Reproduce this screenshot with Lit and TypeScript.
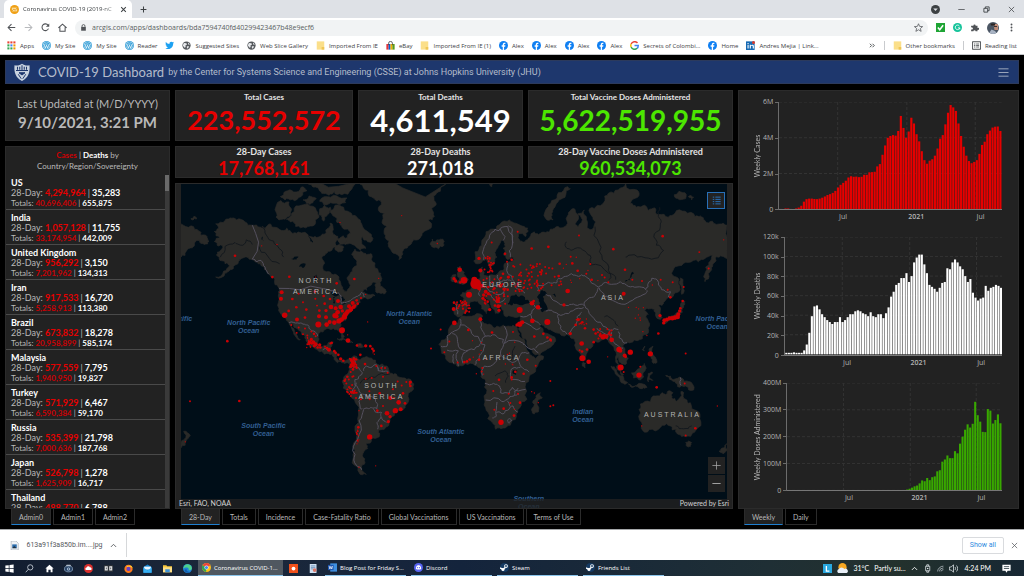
import { LitElement, html, svg, css, nothing } from "lit";
import { customElement, state } from "lit/decorators.js";
import { classMap } from "lit/directives/class-map.js";

type Pt = [number, number];

const pts = (s: string): Pt[] =>
  s.trim().split(/\s+/).map((p) => p.split(",").map(Number) as Pt);

/* Small deterministic generator, so coastlines look the same on every load. */
const noise = (n: number) => {
  const v = Math.sin(n * 127.1 + 11.7) * 43758.5453;
  return v - Math.floor(v) - 0.5;
};

const rough = (list: Pt[], closed: boolean, amp: number): Pt[] => {
  let cur = list;
  for (let level = 0; level < 2; level++) {
    const next: Pt[] = [];
    const last = closed ? cur.length : cur.length - 1;
    for (let i = 0; i < last; i++) {
      const a = cur[i];
      const b = cur[(i + 1) % cur.length];
      const k = noise(a[0] * 3.1 + b[1] * 1.7 + level) * amp;
      next.push(a, [
        (a[0] + b[0]) / 2 - (b[1] - a[1]) * k,
        (a[1] + b[1]) / 2 + (b[0] - a[0]) * k,
      ]);
    }
    if (!closed) next.push(cur[cur.length - 1]);
    cur = next;
  }
  return cur;
};

const line = (s: string, closed = true, amp = 0.55) =>
  "M" +
  rough(pts(s), closed, amp)
    .map((p) => `${p[0].toFixed(1)} ${p[1].toFixed(1)}`)
    .join("L") +
  (closed ? "Z" : "");

const LAND = [
  // North and Central America
  "118,185 135,174 118,155 130,146 122,132 150,122 165,114 185,120 210,126 232,136 255,142 270,146 285,132 296,142 315,150 335,145 345,152 365,160 385,158 400,166 420,170 440,165 452,160 455,148 465,130 475,150 480,165 492,178 505,168 520,175 510,190 490,200 470,212 452,222 443,240 443,262 455,276 475,285 492,292 498,315 504,330 515,336 522,310 519,290 532,275 545,258 543,240 530,225 540,208 558,214 575,225 590,223 600,250 610,275 618,290 620,302 600,308 585,318 575,332 565,328 560,338 575,342 600,348 580,358 568,354 556,358 548,375 532,388 520,402 512,422 496,432 492,446 504,458 508,472 500,474 494,458 484,450 468,450 450,450 438,456 430,468 428,488 438,502 454,500 462,488 474,487 470,500 464,512 478,514 488,522 486,538 496,546 510,545 524,540 520,552 505,550 488,550 478,534 460,522 440,515 420,508 400,495 393,480 380,465 368,448 352,432 348,436 358,452 368,472 376,480 364,474 352,452 342,430 334,420 322,410 312,386 310,350 314,332 300,315 286,290 276,276 264,260 246,247 232,240 215,232 200,236 190,245 180,256 165,270 150,280 122,292 146,274 164,258 150,252 135,242 124,226 136,212 144,202 126,196",
  // Arctic archipelago
  "305,100 318,62 342,66 350,88 330,118 312,120",
  "350,100 372,78 398,72 424,92 432,112 420,134 392,144 362,140 346,126 334,118",
  "432,104 448,76 466,82 458,104 446,124",
  "466,92 480,76 506,82 522,96 546,112 560,132 584,160 592,182 578,186 562,170 560,190 572,206 556,212 538,196 520,192 500,190 516,178 526,160 512,148 500,138 486,128 478,110",
  "316,50 332,34 356,36 378,22 396,32 378,50 352,58 330,60",
  "384,60 402,48 424,56 414,68 394,70",
  "434,64 448,50 486,48 516,54 512,68 474,70 446,74",
  "400,12 520,12 540,12 530,28 500,44 478,34 462,46 440,40 430,24",
  "480,198 492,194 506,204 498,216 484,212",
  "600,318 612,306 616,320 632,330 630,342 614,340 602,336",
  // Greenland and Iceland
  "555,12 580,30 598,56 616,62 610,84 628,100 622,122 636,140 632,168 642,182 640,200 654,220 672,240 682,226 686,208 704,196 716,180 738,170 748,154 770,136 760,120 778,110 770,86 784,72 776,48 796,34 812,12",
  "766,190 772,178 782,186 796,178 808,184 806,198 790,207 774,202",
  // Far eastern Siberia across the date line
  "18,132 48,138 72,154 78,166 96,170 102,184 88,194 74,182 58,192 52,204 34,214 18,232",
  "48,116 60,110 66,116 54,120",
  // Caribbean
  "486,478 502,474 520,482 534,490 518,488 500,482", "544,496 560,494 566,502 550,504",
  // South America
  "520,546 530,534 542,530 546,540 560,536 590,536 606,554 636,560 646,582 664,584 690,596 710,606 714,622 700,642 694,676 684,692 662,698 648,716 642,734 630,748 614,752 614,766 594,776 588,788 574,792 578,808 562,830 570,850 560,866 574,886 552,880 538,858 534,826 544,782 550,730 552,684 530,656 516,636 504,612 510,588 524,570",
  // Africa
  "855,415 880,410 915,403 922,408 918,422 928,432 948,436 956,446 976,444 984,436 1004,440 1024,440 1028,452 1036,474 1050,492 1060,516 1074,532 1080,540 1105,530 1104,540 1088,560 1066,586 1053,610 1056,660 1034,686 1024,712 1006,738 984,746 962,750 952,730 940,700 930,668 936,632 930,612 918,592 916,566 900,558 870,552 850,562 832,550 812,530 798,508 800,482 820,456 832,434",
  "1072,686 1074,664 1084,656 1096,640 1102,656 1090,698 1078,704",
  // Eurasia
  "838,404 838,370 862,370 868,358 856,346 872,340 886,330 896,318 906,300 916,292 914,272 922,262 926,284 944,286 966,284 984,272 988,252 1004,246 1018,240 1010,232 994,236 986,226 984,206 990,190 982,180 972,196 962,214 966,232 958,248 948,260 940,258 934,240 922,244 906,252 896,244 900,216 920,196 930,170 946,148 974,134 1004,120 1022,130 1048,140 1060,154 1052,170 1030,162 1036,184 1050,186 1064,172 1078,156 1090,164 1112,158 1126,148 1150,140 1166,142 1178,130 1180,104 1194,86 1204,100 1200,132 1210,140 1218,112 1208,102 1228,90 1234,110 1236,144 1252,148 1262,126 1250,108 1244,86 1268,76 1290,62 1300,40 1330,30 1352,12 1386,30 1388,52 1366,70 1384,82 1402,78 1420,92 1440,84 1452,104 1480,112 1500,100 1530,94 1560,110 1576,108 1590,122 1612,124 1640,132 1656,136 1656,236 1636,228 1622,232 1616,250 1610,270 1600,298 1590,306 1586,290 1592,262 1606,244 1612,226 1590,236 1570,246 1540,248 1512,258 1494,272 1490,282 1508,294 1514,318 1508,338 1490,354 1466,368 1450,378 1456,392 1462,414 1450,418 1442,402 1438,388 1420,388 1408,392 1420,404 1412,412 1424,432 1420,460 1402,478 1372,488 1356,490 1342,500 1350,520 1360,536 1350,556 1338,550 1330,532 1328,548 1336,570 1346,586 1340,588 1326,570 1322,540 1318,512 1308,494 1300,478 1284,480 1262,486 1252,502 1236,520 1232,542 1224,540 1210,516 1202,490 1188,476 1176,464 1144,460 1120,450 1100,436 1092,428 1096,444 1108,460 1118,462 1142,480 1132,498 1104,516 1080,526 1072,512 1056,484 1040,462 1032,444 1036,424 1034,410 1008,410 986,402 980,386 974,380 966,388 974,398 962,402 952,386 946,370 928,352 922,352 926,366 944,384 938,392 934,402 928,394 920,378 908,364 892,366 880,378 874,394 862,406 850,412",
  // British Isles
  "846,310 854,298 848,290 850,276 846,264 856,260 862,272 868,286 880,298 876,308 858,312", "828,302 832,286 842,284 844,298 836,306",
  // Novaya Zemlya and other northern islands
  "1112,116 1120,80 1130,62 1150,38 1178,20 1186,26 1172,46 1152,60 1138,84 1130,100 1134,120",
  "944,12 952,12 950,20", "1498,44 1512,34 1534,44 1532,56 1508,56", "1540,50 1556,52 1550,60",
  // Japan, Sakhalin
  "1464,424 1480,410 1500,404 1514,394 1518,370 1530,364 1526,378 1522,398 1508,414 1486,422 1470,432",
  "1516,294 1524,300 1528,334 1520,344 1518,318",
  // South-east Asia
  "1308,560 1324,570 1344,590 1358,610 1346,612 1328,590", "1360,614 1384,618 1416,624 1402,628 1374,624",
  "1370,580 1384,574 1400,560 1408,552 1414,566 1404,580 1396,602 1376,596", "1420,582 1432,578 1424,588 1434,604 1424,600 1420,608",
  "1422,512 1434,500 1438,530 1446,548 1436,552 1428,530", "1402,510 1410,500 1408,514",
  "1472,588 1486,590 1496,600 1520,596 1540,606 1556,632 1532,620 1508,622 1500,606 1484,600",
  "1224,546 1232,552 1230,566 1222,560",
  // Oceania
  "1392,690 1396,674 1426,668 1442,650 1462,640 1472,646 1478,636 1494,640 1490,656 1504,666 1512,658 1518,636 1526,640 1532,660 1546,670 1568,696 1574,718 1562,754 1546,772 1530,772 1512,766 1504,750 1492,752 1486,740 1462,738 1432,750 1402,752 1400,730",
  "1532,790 1550,790 1546,802 1536,802", "1632,816 1646,806 1656,794 1656,810 1644,824",
  "18,792 28,780 26,756 46,770 34,784 18,806",
].map((s) => line(s));

const WATER = [
  "998,372 1006,352 1022,344 1032,352 1044,348 1064,366 1048,374 1024,372 1008,378",
  "1086,352 1096,336 1110,334 1114,346 1104,352 1112,372 1116,392 1102,398 1092,384 1094,368",
  "468,340 484,332 496,344 486,350", "474,352 480,352 480,372 474,370", "496,350 510,358 500,366", "500,372 518,366 508,374",
  "348,238 370,230 364,240", "372,262 392,252 386,264", "416,290 424,284 426,304 418,306", "256,180 262,170 266,184",
  "1350,306 1366,290 1372,276 1376,282 1364,302", "1130,344 1140,340 1142,352", "1016,572 1026,572 1024,586 1014,584",
  "400,160 408,176 414,188 406,184", "486,180 494,192 484,196",
].map((s) => line(s));

const BORDERS = [
  "232,136 232,238 246,246 258,242 270,262 282,284", "312,326 440,326 464,330 480,338 498,348 500,372 518,366 532,358 548,350 560,338 568,352",
  "342,430 368,430 384,434 398,436 410,454 428,470", "444,512 452,506 466,512", "926,240 928,200 944,166 960,148 972,152 998,140 1012,196 1006,232",
  "976,148 990,170 984,182", "1000,138 1012,150 1014,190", "998,250 998,280 1012,300 1024,326 1040,330 1050,340",
  "968,286 974,306 998,300 1010,304", "944,288 944,306 952,322 976,320 994,328", "906,312 918,322 910,340 916,350", "932,322 944,336 962,344 986,336 990,352",
  "948,346 960,364 976,368 990,356", "862,372 878,378", "846,372 848,404", "1088,334 1086,318 1120,308 1144,310 1150,296 1172,290 1190,282 1210,290 1230,288 1246,304 1270,322",
  "1270,322 1292,308 1310,314 1336,306 1360,320 1386,322 1412,330 1420,310 1430,296 1446,300 1460,330 1486,336 1480,352",
  "1272,324 1288,350 1312,362 1350,374 1380,356 1412,342 1416,332", "1270,324 1260,348 1238,358 1228,376 1240,392 1262,424 1284,440 1306,452 1330,450",
  "1112,344 1126,348 1150,370 1180,378 1200,376 1228,378", "1112,394 1130,392 1150,404 1150,430 1160,452 1176,464", "1150,404 1180,402 1196,392 1226,384",
  "1180,462 1200,440 1206,412 1220,398", "1036,410 1070,402 1078,386", "1066,404 1080,424 1096,436", "1064,366 1080,382 1100,386",
  "1036,426 1056,432 1080,448 1096,444", "1082,506 1110,488 1130,482", "1266,446 1280,456 1310,462", "1290,468 1298,480", "1310,458 1314,486 1330,500 1344,506", "1330,456 1344,488 1356,490",
  "854,418 856,436 832,458 816,470 816,500 798,500", "856,436 890,462 918,490 912,500 880,512 850,500 846,472 832,462", "914,424 920,450 932,470 918,490",
  "932,470 960,466 986,480 986,496 978,530", "988,440 988,492 1046,492", "918,492 930,496 920,520 912,540 900,556", "880,512 866,520 864,552", "850,514 850,560", "816,512 850,514", "836,524 836,552", "976,530 960,550 928,560 922,588",
  "980,530 1006,546 1030,540 1040,520 1062,520", "1030,540 1036,560 1062,578", "1036,564 1014,566 1006,584 1010,600 1050,606", "930,612 956,612 974,620 976,640 1004,642 1012,624 1052,630",
  "932,662 980,666 996,660 1016,650 1032,644", "966,668 964,710 952,716", "964,700 984,704 1002,690 1014,680 1028,698", "996,664 1006,682", "1016,648 1018,636 1030,626", "998,724 1004,718 1010,724 1002,732 998,724",
  "1044,494 1060,506 1090,520", "538,534 534,560 552,566 562,580 550,598 540,600 540,618 552,630 560,644 556,688 562,688",
  "566,574 574,560 592,562 604,556 610,574 640,576", "606,558 610,574", "622,560 624,574", "562,644 590,652 606,672 606,688 592,686 580,688 566,688", "594,688 610,700 620,700 618,712 606,730 608,750",
  "566,690 552,724 548,780 540,826 544,858 560,872", "620,714 634,730", "532,640 544,610", "1516,594 1518,618",
].map((s) => line(s, false, 0.4));

const RIVERS = [
  "136,232 150,200 180,188 196,196 214,180 232,194", "258,142 274,166 296,184 312,206 326,232", "252,200 276,226 314,252",
  "1174,186 1176,206 1200,206 1230,214 1248,234 1246,256 1300,280 1322,300", "1260,140 1272,190 1282,240 1300,272 1302,300",
  "1454,82 1450,110 1456,132 1438,162 1444,196 1466,212 1450,234 1410,234 1366,226 1352,232", "644,584 600,594 570,600 556,612", "960,590 990,574 1000,590 992,610",
  "1288,412 1306,414 1320,426 1330,440", "1502,740 1512,748 1540,748 1550,740", "1020,500 1014,530 1010,548",
].map((s) => line(s, false, 0.5));

const DOTS = `180,228,4 292,292,4 343,291,4 485,311,4 538,298,4 422,292,2 260,198,2 306,194,2 495,128,2 680,107,2 787,191,2 611,296,2
320,338,6 318,357,6 329,407,8 352,358,4 341,394,4 366,420,6 364,383,4 384,368,3 394,390,4 390,414,4 371,342,3 420,336,4 421,357,3 426,378,3 446,349,4 449,372,4 433,393,4 432,410,6 430,435,9 453,393,5 453,413,6 455,435,7 465,358,4 468,382,7 482,386,6 489,364,6 497,382,7 464,427,6 478,429,7 480,408,8 488,398,7 492,424,8 500,420,7 508,412,8 514,402,7 502,394,5 522,380,6 533,370,6 536,382,6 526,392,6 545,362,4 548,372,4 558,355,3 572,344,2 501,452,9 518,466,2 519,483,7 470,490,4 462,511,6 466,492,3 578,427,2 157,485,4 528,388,7 518,396,7 510,406,7 484,410,7 540,378,4
349,436,3 371,444,3 365,460,3 390,447,3 384,464,3 397,468,3 409,456,3 417,463,4 422,470,3 409,480,5 404,488,6 415,488,6 422,494,6 434,496,5 428,504,4 397,494,3 402,494,3 410,492,4 418,500,4 436,504,4 450,502,3 456,506,4 478,515,4 482,520,4 490,526,4 497,538,5 505,544,4 546,498,4 555,496,2 572,499,5 586,500,4 592,508,4 596,514,4 598,524,2 556,526,4 594,520,2
528,540,4 534,548,6 530,556,5 538,552,5 526,562,4 534,570,4 544,560,3 570,554,4 527,578,3 517,592,4 509,604,4 514,612,3 522,624,2 528,638,4 530,628,2 536,640,4 543,656,3 545,640,3 558,660,3 583,636,3 584,660,3 572,598,3 590,596,3 624,592,3 604,560,3 619,566,3 630,566,3 638,580,3 614,642,4 646,656,6 656,656,3 654,630,3 668,606,3 680,618,3 694,608,3 706,608,5 706,620,4 704,614,3 684,642,4 690,672,4 671,669,7 661,694,8 677,690,6 636,702,7 645,712,5 640,727,5 624,680,3 607,694,4 619,740,4 584,773,8 550,744,4 548,756,3 546,764,3 552,694,2 546,794,2 602,860,2 552,864,2 193,665,4 45,666,3 31,788,2
797,450,3 823,486,3 808,518,3 768,507,3 837,369,4 836,388,6 838,430,7 837,297,5 854,270,7 867,302,10 856,308,4 842,304,5 882,345,9 902,312,16 898,300,9 912,326,6 922,318,6 916,272,6 940,342,5 932,336,6 926,346,5 924,356,5 938,366,4 930,362,4 944,390,5 968,364,7 970,380,6 960,378,4 972,392,5 972,356,4 940,322,4 958,326,4 976,318,6 986,328,4 998,330,4 1000,292,5 984,282,4 996,246,3 948,256,3 912,236,5 950,188,3 1028,156,3 1070,206,4 1120,201,4 1010,240,4 990,222,4 1034,391,9 1071,371,7 1089,383,7 1076,364,4 1117,427,9 1072,424,7 1034,434,8 1042,428,6 1026,436,5 916,419,6 880,451,4 951,459,4 1014,457,3 1078,471,4 1105,463,4 1117,474,4 1126,480,4 1128,484,3 1178,334,7 1167,376,5 1187,231,3 1192,251,4 1208,273,4 1151,289,4 1154,252,4 1246,253,3 1212,167,3 1315,208,4 1350,270,4 1463,169,4 1573,217,3 1646,180,2 1601,266,3 1346,342,6 1281,286,3 1289,293,3 1234,282,3 1250,300,4 1372,300,3 1401,304,3 1457,300,3 1478,330,3 1493,308,3 1526,322,3 1523,364,4 1455,408,5 1450,462,4 1486,353,4 1432,316,2 1300,308,3
1220,492,7 1221,516,4 1236,510,4 1186,462,5 1210,420,5 1202,436,4 1222,428,4 1230,446,4 1256,450,4 1262,462,4 1276,468,5 1284,472,8 1294,470,6 1302,462,4 1310,481,7 1332,510,8 1366,518,8 1349,528,6 1352,532,4 1336,514,6 1426,523,8 1532,522,3 1222,536,9 1241,547,7 1206,569,3 1214,512,3 1256,488,4 1337,564,9 1346,578,3 1392,587,8 1396,562,3 1445,624,4 1529,612,3 1627,680,2 1561,747,4 1532,769,3 1400,740,2 1298,532,2
978,729,8 986,688,4 958,691,3 1006,671,3 1035,670,4 1017,709,4 955,635,3 1001,643,3 1029,643,3 972,601,4 1010,594,4 1010,600,3 1021,577,4 1046,583,4 1057,541,4 1082,559,3 912,541,4 922,566,3 884,540,4 876,546,4 868,548,4 848,549,3 920,576,3 926,584,2 904,583,2 1126,605,3 1126,681,3 1135,678,3 1070,637,2 1078,641,2 1090,670,2 1018,690,2
1468,422,6 1476,420,6 1484,416,6 1492,416,7 1500,414,7 1508,412,7 1510,404,6 1514,394,5 1516,386,4 1466,430,5`
  .trim()
  .split(/\s+/)
  .map((d) => d.split(",").map(Number));

/* Clusters of small regional counts: x, y, width, height, amount. */
const CLUSTERS = [
  [1010, 255, 90, 80, 44], [1030, 250, 130, 80, 26], [928, 228, 30, 50, 18], [842, 362, 44, 38, 26], [910, 290, 90, 90, 30],
  [1204, 400, 36, 40, 12], [1262, 448, 50, 30, 14], [524, 532, 22, 34, 26], [506, 586, 40, 64, 18], [544, 736, 8, 60, 8],
  [392, 470, 40, 36, 10], [1360, 380, 60, 90, 10], [1160, 230, 120, 90, 8], [880, 480, 170, 80, 12],
];

for (const [x, y, w, h, n] of CLUSTERS) {
  for (let i = 0; i < n; i++) {
    DOTS.push([x + (noise(x + i * 7.3) + 0.5) * w, y + (noise(y + i * 3.9 + 50) + 0.5) * h, n > 12 ? 3 : 2]);
  }
}

/* Map labels: left and top of the centre in percent of the map. */
const PLACES: { x: number; y: number; sea?: boolean; lines: string[] }[] = [
  { x: 24.7, y: 31.4, lines: ["NORTH", "AMERICA"] },
  { x: 36.7, y: 63.9, lines: ["SOUTH", "AMERICA"] },
  { x: 59, y: 30.8, lines: ["EUROPE"] },
  { x: 79.1, y: 34.8, lines: ["ASIA"] },
  { x: 58.7, y: 53.5, lines: ["AFRICA"] },
  { x: 90, y: 71.1, lines: ["AUSTRALIA"] },
  { x: 12.4, y: 44.2, sea: true, lines: ["North Pacific", "Ocean"] },
  { x: 41.8, y: 41.3, sea: true, lines: ["North Atlantic", "Ocean"] },
  { x: 15.1, y: 75.8, sea: true, lines: ["South Pacific", "Ocean"] },
  { x: 47.6, y: 77.9, sea: true, lines: ["South Atlantic", "Ocean"] },
  { x: 73.6, y: 71.7, sea: true, lines: ["Indian", "Ocean"] },
  { x: 98.2, y: 42.8, sea: true, lines: ["North Pacific", "Ocean"] },
  { x: -1.9, y: 41.6, sea: true, lines: ["North Pacific"] },
  { x: 63.7, y: 98.4, sea: true, lines: ["Southern", "Ocean"] },
];

@customElement("world-map")
class WorldMap extends LitElement {
  static styles = css`
    :host { display: block; position: relative; overflow: hidden; background: #000e18; padding: 0; min-height: 0; }
    .canvas { display: block; width: 100%; height: 100%; }
    .land { fill: #2a2a28; stroke: #2a2a28; stroke-width: 2; }
    .water { fill: #000e18; }
    .border { fill: none; stroke: #54505e; stroke-width: 3; }
    .river { fill: none; stroke: #14191e; stroke-width: 3; }
    .dot { fill: #cc0004; }
    .place { position: absolute; transform: translate(-50%, -50%); text-align: center; white-space: nowrap;
      font: 7px/11px "Liberation Sans", sans-serif; color: #b4b4b2; letter-spacing: 2px; }
    .place.sea { font: italic bold 7px/8px "Liberation Sans", sans-serif; color: #325f92; letter-spacing: normal; }
    .row { display: block; }
  `;

  render() {
    return html`
      <svg class="canvas" viewBox="18 12 1638 975" preserveAspectRatio="none" aria-label="World map of cases">
        ${LAND.map((d) => svg`<path class="land" d=${d}></path>`)}
        ${WATER.map((d) => svg`<path class="water" d=${d}></path>`)}
        ${RIVERS.map((d) => svg`<path class="river" d=${d}></path>`)}
        ${BORDERS.map((d) => svg`<path class="border" d=${d}></path>`)}
        ${DOTS.map(([x, y, r]) => svg`<circle class="dot" cx=${x} cy=${y} r=${r}></circle>`)}
      </svg>
      ${PLACES.map(
        (p) => html`<div class=${classMap({ place: true, sea: !!p.sea })} style="left:${p.x}%;top:${p.y}%">
          ${p.lines.map((l) => html`<span class="row">${l}</span>`)}
        </div>`
      )}
    `;
  }
}

const CASES = [0.01, 0.02, 0.05, 0.05, 0.01, 0.02, 0.05, 0.1, 0.2, 0.43, 0.57, 0.6, 0.6, 0.58, 0.57, 0.6, 0.65, 0.72, 0.8, 0.85, 0.92, 1.03, 1.22, 1.37, 1.48, 1.6, 1.78, 1.85, 1.82, 1.83, 1.8, 1.82, 1.93, 1.93, 2.07, 2.08, 2.1, 2.4, 2.53, 3.05, 3.57, 4, 4.1, 4.15, 4.12, 4.38, 5.22, 4.55, 4, 4.35, 5.12, 4.8, 4.2, 3.8, 3.25, 2.75, 2.55, 2.72, 2.8, 3, 3.4, 3.95, 4.15, 4.75, 5.4, 5.83, 5.7, 5.5, 4.8, 4.1, 3.5, 3, 2.7, 2.58, 2.65, 2.75, 3.1, 3.6, 3.78, 4.2, 4.4, 4.57, 4.62, 4.63, 4.38];
const DEATHS = [1.5, 1.5, 1.5, 2, 1.5, 1.5, 1.5, 4, 10, 22, 39, 49, 50, 46, 41, 38, 35, 33, 31, 33, 33, 38, 33, 35, 38, 41, 41, 44, 45, 44, 42, 41, 39, 43, 39, 38, 41, 41, 37, 42, 48, 59, 64, 71, 73, 78, 78, 83, 74, 80, 94, 99, 102, 102, 92, 83, 71, 69, 67, 64, 68, 73, 74, 88, 87, 94, 97, 94, 90, 87, 80, 74, 77, 63, 58, 55, 57, 58, 70, 65, 68, 69, 71, 70, 68];
const DOSES = [...Array(47).fill(1), 3, 6, 10, 15, 18, 26, 37, 34, 46, 38, 49, 52, 71, 75, 107, 115, 130, 120, 120, 146, 138, 174, 200, 226, 246, 234, 248, 330, 280, 256, 218, 217, 303, 297, 249, 262, 283, 250];

@customElement("weekly-chart")
class WeeklyChart extends LitElement {
  static properties = { label: {}, tone: {}, max: { type: Number }, ticks: {}, values: {} };
  declare label: string;
  declare tone: string;
  declare max: number;
  declare ticks: string[];
  declare values: number[];

  static styles = css`
    :host { display: grid; grid-template-columns: 10px auto 4px minmax(0, 1fr); grid-template-rows: minmax(0, 1fr) 17px;
      color: #b4b4b4; font: 7px/8px "Open Sans", sans-serif; min-height: 0; }
    .title { writing-mode: vertical-rl; transform: rotate(180deg); text-align: center; font-family: Lato, sans-serif; line-height: 10px; }
    .scale { display: flex; flex-direction: column; justify-content: space-between; text-align: right; margin: -4px 2px -4px 1px; }
    .marks { display: flex; flex-direction: column; justify-content: space-between; border-right: 1px solid #6c6c6c; }
    .mark { height: 1px; background: #6c6c6c; }
    .plot { display: block; width: 100%; height: 100%; border-bottom: 1px solid #777; box-sizing: border-box; }
    .rule { stroke: #333; stroke-dasharray: 3 2; vector-effect: non-scaling-stroke; }
    .red { fill: #e60000; }
    .white { fill: #fff; }
    .green { fill: #38a800; }
    .months { grid-column: 4; display: grid; grid-template-columns: 264fr 310fr 307fr 119fr; padding-top: 3px; }
    .month { padding-left: 1px; }
    .year { font-weight: 600; }
  `;

  render() {
    const steps = this.ticks.length - 1;
    return html`
      <div class="title">${this.label}</div>
      <div class="scale">${this.ticks.map((t) => html`<span>${t}</span>`)}</div>
      <div class="marks">${this.ticks.map(() => html`<i class="mark"></i>`)}</div>
      <svg class="plot" viewBox="0 0 850 100" preserveAspectRatio="none" aria-label=${this.label}>
        ${this.ticks.map((_, i) => svg`<line class="rule" x1="0" x2="850" y1=${(i * 100) / steps} y2=${(i * 100) / steps}></line>`)}
        ${[224, 488, 749].map((x) => svg`<line class="rule" x1=${x} x2=${x} y1="0" y2="100"></line>`)}
        ${this.values.map((v, i) => {
          const h = (v / this.max) * 100;
          return svg`<rect class=${this.tone} x=${i * 10 + 1} y=${100 - h} width="8.2" height=${h}></rect>`;
        })}
      </svg>
      <div class="months"><span></span><span class="month">Jul</span><span class="month year">2021</span><span class="month">Jul</span></div>
    `;
  }
}

const COUNTRIES = [
  ["US", "4,294,964", "35,283", "40,696,406", "655,875"],
  ["India", "1,057,128", "11,755", "33,174,954", "442,009"],
  ["United Kingdom", "956,292", "3,150", "7,201,962", "134,313"],
  ["Iran", "917,533", "16,720", "5,258,913", "113,380"],
  ["Brazil", "673,832", "18,278", "20,958,899", "585,174"],
  ["Malaysia", "577,559", "7,795", "1,940,950", "19,827"],
  ["Turkey", "571,929", "6,467", "6,590,384", "59,170"],
  ["Russia", "535,399", "21,798", "7,000,636", "187,768"],
  ["Japan", "526,798", "1,278", "1,625,909", "16,717"],
  ["Thailand", "488,770", "6,788", "1,352,953", "13,920"],
];

const TOTALS = [
  ["Total Cases", "223,552,572", "red"],
  ["Total Deaths", "4,611,549", "white tall"],
  ["Total Vaccine Doses Administered", "5,622,519,955", "green wide"],
];
const RECENT = [
  ["28-Day Cases", "17,768,161", "red"],
  ["28-Day Deaths", "271,018", "white"],
  ["28-Day Vaccine Doses Administered", "960,534,073", "green"],
];

const ICONS: Record<string, unknown> = {
  site: svg`<circle cx="12" cy="12" r="12" fill="#f0a014"/><path d="M5 7h14v10H5z" fill="#f9dc9c"/><path d="M5 16l5-5 4 3 5-6" stroke="#e08a00" stroke-width="2" fill="none"/>`,
  close: svg`<path d="M4 4l16 16M20 4L4 20" stroke="currentColor" stroke-width="3.500"/>`,
  thinClose: svg`<path d="M3 3l18 18M21 3L3 21" stroke="currentColor" stroke-width="2.500"/>`,
  plus: svg`<path d="M12 2v20M2 12h20" stroke="currentColor" stroke-width="3.500"/>`,
  thinPlus: svg`<path d="M12 1v22M1 12h22" stroke="currentColor" stroke-width="2"/>`,
  minus: svg`<path d="M1 12h22" stroke="currentColor" stroke-width="2.500"/>`,
  down: svg`<circle cx="12" cy="12" r="12" fill="currentColor"/><path d="M6 9h12l-6 7z" fill="#dee1e6"/>`,
  restore: svg`<path d="M3 8h13v13H3zM8 8V3h13v13h-5" stroke="currentColor" stroke-width="3" fill="none"/>`,
  back: svg`<path d="M22 12H3M12 3l-9 9 9 9" stroke="currentColor" stroke-width="2.800" fill="none"/>`,
  forward: svg`<path d="M2 12h19M12 3l9 9-9 9" stroke="currentColor" stroke-width="2.800" fill="none"/>`,
  reload: svg`<path d="M20 15a9 9 0 1 1-1-9" stroke="currentColor" stroke-width="2.800" fill="none"/><path d="M22 1v9h-9z" fill="currentColor"/>`,
  home: svg`<path d="M1 13L12 3l11 10M5 11v11h14V11" stroke="currentColor" stroke-width="2.800" fill="none"/>`,
  lock: svg`<path d="M4 10h16v13H4z" fill="currentColor"/><path d="M7 10V7a5 5 0 0 1 10 0v3" stroke="currentColor" stroke-width="3" fill="none"/>`,
  star: svg`<path d="M12 2l3 7 8 .6-6 5 2 7.700-7-4.300-7 4.300 2-7.700-6-5L9 9z" stroke="currentColor" stroke-width="2" fill="none"/>`,
  check: svg`<path d="M0 0h24v24H0z" fill="#1fa535"/><path d="M5 12l5 6 9-12" stroke="#fff" stroke-width="4" fill="none"/>`,
  gram: svg`<circle cx="12" cy="12" r="12" fill="#15c39a"/><path d="M17 8a6 6 0 1 0 1 5h-5M18 13v4" stroke="#fff" stroke-width="2.400" fill="none"/>`,
  puzzle: svg`<path d="M3 7h6a3 3 0 1 1 6 0h5v6a3 3 0 1 1 0 5v4h-5a3 3 0 1 0-6 0H3v-5a3 3 0 1 0 0-5z" fill="currentColor"/>`,
  face: svg`<clipPath id="f"><circle cx="12" cy="12" r="12"/></clipPath><g clip-path="url(#f)"><path d="M0 0h24v24H0z" fill="#4b5664"/><path d="M13 4h9v12h-7z" fill="#c08d78"/><path d="M7 3h9v4H8z" fill="#2b2523"/><path d="M14 8h6v2h-6z" fill="#38302e"/><path d="M3 24l6-9 7 3 5 6z" fill="#a9b4c4"/></g>`,
  dots: svg`<circle cx="12" cy="4" r="2.500" fill="currentColor"/><circle cx="12" cy="12" r="2.500" fill="currentColor"/><circle cx="12" cy="20" r="2.500" fill="currentColor"/>`,
  apps: svg`${[["#ea4335", 1, 1], ["#ea4335", 9, 1], ["#ea4335", 17, 1], ["#34a853", 1, 9], ["#4285f4", 9, 9], ["#f29900", 17, 9], ["#34a853", 1, 17], ["#34a853", 9, 17], ["#f29900", 17, 17]].map(
    ([c, x, y]) => svg`<rect x=${x} y=${y} width="5.500" height="5.500" fill=${c}/>`
  )}`,
  wp: svg`<circle cx="12" cy="12" r="12" fill="#2e9bd6"/><circle cx="12" cy="12" r="9.600" fill="none" stroke="#fff" stroke-width="1.200"/><path d="M5 8l4 11 3-8 3 8 4-11M7 8h3M11 8h4" stroke="#fff" stroke-width="2" fill="none"/>`,
  bird: svg`<path d="M1 19c3 .3 5-.4 7-2-2-.2-4-1.500-4.600-3.400h2C3 13 1.600 11 1.500 8.800l2 .600C1.600 8 1 5 2.300 2.800 5 6 8 7.700 12 8c-1-4 2-6.500 5-6.200 1.500.1 2.600.8 3.400 1.600L23.500 2l-2 2.800 2.500-.5-2.200 2.400C22 14 17 21.500 9 21.500c-3 0-5.800-.8-8-2.500z" fill="#1da1f2"/>`,
  globe: svg`<circle cx="12" cy="12" r="11" fill="#54585c"/><path d="M5 5l7 1 1 4-4 2 1 4-3 2-5-6zM16 4l5 5-3 1-2-2zM13 14l6 0-3 6-3-1z" fill="#e8eaed"/>`,
  folder: svg`<path d="M2 1h20v22H2z" fill="#fbdf8a"/><path d="M15 16h7v7h-7z" fill="#efc554"/>`,
  ebay: svg`<path d="M1 8h6v15H1z" fill="#e53238"/><path d="M7 8h5v15H7z" fill="#0064d2"/><path d="M12 8h5v15h-5z" fill="#f5af02"/><path d="M17 8h6v15h-6z" fill="#5b9a1b"/><path d="M7 11V6a5 5 0 0 1 10 0v5" stroke="#333" stroke-width="2" fill="none"/>`,
  fb: svg`<circle cx="12" cy="12" r="12" fill="#0f7ff2"/><path d="M10 24v-9H7v-4h3V9c0-4 3-5 7-4.400V8c-3-.4-3.500.4-3.500 3H17l-.6 4h-2.900v9z" fill="#fff"/>`,
  google: svg`<path d="M20 5A10.500 10.500 0 0 0 3 8" stroke="#ea4335" stroke-width="4" fill="none"/><path d="M3 8a10 10 0 0 0 0 8" stroke="#fbbc05" stroke-width="4" fill="none"/><path d="M3 16a10 10 0 0 0 16 3.500" stroke="#34a853" stroke-width="4" fill="none"/><path d="M12 12h10c0 3-1 6-3 7.500" stroke="#4285f4" stroke-width="4" fill="none"/>`,
  linkedin: svg`<path d="M0 1h23v23H0z" fill="#1569b3"/><path d="M4 10h3v10H4zM4 5h3v3H4zM10 10h3v2c2-3 8-3 8 2v6h-3v-5c0-4-5-3-5 0v5h-3z" fill="#fff"/><circle cx="20" cy="4" r="4" fill="#d93b2b"/>`,
  list: svg`<path d="M1 2h22v20H1z" fill="none" stroke="currentColor" stroke-width="2.500"/><path d="M5 8h4M5 12h4M5 16h4M11 8h8M11 12h8M11 16h8" stroke="currentColor" stroke-width="2"/>`,
  more: svg`<path d="M3 6l6 6-6 6M12 6l6 6-6 6" stroke="currentColor" stroke-width="3" fill="none"/>`,
  shield: svg`<path d="M2 3c4 1 7 0 10-2 3 2 6 3 10 2 1 10-2 17-10 21C4 20 1 13 2 3z" fill="#c9d3e0"/><path d="M4 10h16M12 3v7M6 5v4M9 5v4M15 5v4M18 5v4" stroke="#1e376d" stroke-width="1.400"/><path d="M8 13l8 0-4 3zM7 15l4 6M17 15l-4 6" fill="#1e376d" stroke="#1e376d" stroke-width="1.300"/>`,
  menu: svg`<path d="M1 4h22M1 12h22M1 20h22" stroke="currentColor" stroke-width="1.800"/>`,
  legend: svg`<path d="M2 3h4M2 9h4M2 15h4M2 21h4M9 3h14M9 9h14M9 15h14M9 21h14" stroke="currentColor" stroke-width="2.600"/>`,
  file: svg`<path d="M3 0h13l6 6v18H3z" fill="#eef1f4" stroke="#9aa3ab" stroke-width="1.500"/><path d="M6 9h12v10H6z" fill="#2a6bab"/><path d="M6 19l5-6 7 6z" fill="#23303c"/>`,
  up: svg`<path d="M3 17l9-9 9 9" stroke="currentColor" stroke-width="3" fill="none"/>`,
  win: svg`<path d="M1 4l9-1v8H1zM12 2.700L23 1v10H12zM1 13h9v8l-9-1zM12 13h11v10l-11-1.700z" fill="#fff"/>`,
  search: svg`<circle cx="14" cy="9" r="7" fill="none" stroke="#dfe6ee" stroke-width="2"/><path d="M9 14l-7 8" stroke="#dfe6ee" stroke-width="2"/>`,
  house: svg`<path d="M12 2l11 10h-3v10h-5v-7H9v7H4V12H1z" fill="#fff"/>`,
  camera: svg`<path d="M7 2h10l2 4H5z" fill="#c9d0d8"/><ellipse cx="12" cy="13" rx="11" ry="8" fill="#2c4668" stroke="#8ba3be" stroke-width="2"/><circle cx="12" cy="13" r="4" fill="#b9d2ee"/><circle cx="12" cy="13" r="2" fill="#23334a"/>`,
  cloud: svg`<circle cx="12" cy="12" r="12" fill="#da2f2c"/><path d="M5 16a4 4 0 0 1 2-7 5 5 0 0 1 9 0 4 4 0 0 1 3 7z" fill="#fff"/>`,
  binoc: svg`<path d="M0 3h24v18H0z" fill="#2d3238"/><path d="M2 6h8v11H2zM14 6h8v11h-8z" fill="#e6e8ea"/><path d="M5 9h2v5H5zM17 9h2v5h-2z" fill="#2d3238"/>`,
  fox: svg`<circle cx="12" cy="13" r="11" fill="#ff7a1a"/><path d="M5 2c2 5 8 3 13 2-2-1 4 0 5 7-3-3-9-6-14-2z" fill="#ffc933"/><circle cx="12" cy="13" r="5.500" fill="#6a3ec2"/>`,
  mail: svg`<path d="M1 8L12 1l11 7v15H1z" fill="#1486d4"/><path d="M3 7h18v8H3z" fill="#eaf6ff"/><path d="M1 9l11 8 11-8v14H1z" fill="#38b0f2"/>`,
  explorer: svg`<path d="M0 3h9l2 3h13v16H0z" fill="#f9c83c"/><path d="M0 9h24v13H0z" fill="#fde08a"/><path d="M6 14h12v8H6z" fill="#3d92d8"/>`,
  edge: svg`<circle cx="12" cy="12" r="12" fill="#1f83d6"/><path d="M1 12C1 4 9 0 15 1c7 1 10 7 8 13-2 3-7 3-8 1 1-4-2-6-6-6-4 0-7 2-8 3z" fill="#4fd18b"/><path d="M9 13c0 6 5 9 11 8-6 5-15 2-16-5z" fill="#135ba8"/>`,
  chrome: svg`<circle cx="12" cy="12" r="12" fill="#fbc116"/><path d="M12 12L1.600 6a12 12 0 0 1 20.800 0z" fill="#e8453c"/><path d="M12 12L1.600 6A12 12 0 0 0 11 24z" fill="#34a450"/><circle cx="12" cy="12" r="5.500" fill="#fff"/><circle cx="12" cy="12" r="4.300" fill="#4688f1"/>`,
  record: svg`<path d="M0 0h24v24H0z" fill="#f1511b"/><circle cx="12" cy="12" r="5" fill="#fff"/>`,
  notes: svg`<path d="M2 0h18v24H2z" fill="#cfe0f2"/><path d="M5 5h12M5 9h12M5 13h7" stroke="#5d86b3" stroke-width="2"/><circle cx="15" cy="16" r="5" fill="#d8776a"/>`,
  word: svg`<path d="M6 1h18v22H6z" fill="#3f8fdf"/><path d="M0 5h15v14H0z" fill="#1d56b0"/><path d="M3 8l2 8 2.500-7L10 16l2-8" stroke="#fff" stroke-width="1.800" fill="none"/>`,
  discord: svg`<circle cx="12" cy="12" r="12" fill="#5865f2"/><path d="M5 16c0-5 1-8 3-9 3-1 5-1 8 0 2 1 3 4 3 9-4 2-10 2-14 0z" fill="#fff"/><circle cx="9.500" cy="12.500" r="1.600" fill="#5865f2"/><circle cx="14.500" cy="12.500" r="1.600" fill="#5865f2"/>`,
  steam: svg`<circle cx="12" cy="12" r="12" fill="#153a63"/><circle cx="16" cy="8" r="5" fill="#fff"/><circle cx="16" cy="8" r="2.500" fill="#153a63"/><path d="M0 13l8 4 6-5" stroke="#fff" stroke-width="4" fill="none"/><circle cx="8" cy="17" r="4" fill="#fff"/>`,
  ell: svg`<path d="M0 0h24v24H0z" fill="#29a8e0"/><path d="M9 5v14h8" stroke="#fff" stroke-width="3.500" fill="none"/>`,
  weather: svg`<circle cx="12" cy="9" r="9" fill="#f7a823"/><path d="M3 22a5 5 0 0 1 1-9 7 7 0 0 1 12 0 5 5 0 0 1 5 9z" fill="#e9f0f8"/>`,
  device: svg`<path d="M7 6h11v12H7zM10 6V2h5v4M10 18v4h5v-4" stroke="#e7ecef" stroke-width="2" fill="none"/><circle cx="12.500" cy="12" r="2" fill="#e7ecef"/>`,
  wifi: svg`<path d="M2 22a20 20 0 0 1 20-18M8 22A14 14 0 0 1 22 10M14 22a8 8 0 0 1 8-6" stroke="#c4ccd2" stroke-width="2.500" fill="none"/>`,
  sound: svg`<path d="M1 8h5l6-6v20l-6-6H1z" fill="none" stroke="#e7ecef" stroke-width="2"/><path d="M16 8c2 3 2 5 0 8M20 4c4 5 4 11 0 16" stroke="#e7ecef" stroke-width="2" fill="none"/>`,
  note: svg`<path d="M1 2h22v16h-8l-3 5-3-5H1z" fill="#fff"/><path d="M5 7h14M5 12h14" stroke="#1d2d36" stroke-width="2"/>`,
};

const icon = (name: string, cls = "") =>
  html`<svg class="icon ${cls}" viewBox="0 0 24 24" aria-hidden="true">${ICONS[name]}</svg>`;

const BOOKMARKS = [
  ["apps", "Apps"], ["wp", "My Site"], ["wp", "My Site"], ["wp", "Reader"], ["bird", ""], ["globe", "Suggested Sites"],
  ["globe", "Web Slice Gallery"], ["folder", "Imported From IE"], ["ebay", "eBay"], ["folder", "Imported From IE (1)"],
  ["fb", "Alex"], ["fb", "Alex"], ["fb", "Alex"], ["fb", "Alex"], ["google", "Secrets of Colombi..."], ["fb", "Home"],
  ["linkedin", "Andres Mejia | Link..."],
];

@customElement("app-root")
class AppRoot extends LitElement {
  @state() admin = "Admin0";
  @state() view = "28-Day";
  @state() period = "Weekly";

  static styles = css`
    :host { display: flex; flex-direction: column; height: 100vh; min-height: 0; overflow: hidden; background: #000;
      font: 8px/10px Lato, sans-serif; color: #b9b9b9; }
    * { box-sizing: border-box; }
    button { font: inherit; color: inherit; background: none; border: 0; padding: 0; margin: 0; display: flex; align-items: center; cursor: pointer; }
    a { color: inherit; text-decoration: none; }
    .icon { width: 9px; height: 9px; flex: none; display: block; }
    .small { width: 7px; height: 7px; }
    .large { width: 11px; height: 11px; }
    .grow { flex: 1; }

    .strip { display: flex; align-items: center; height: 18px; background: #dee1e6; color: #3c4043; padding: 0 9px 0 4px; font: 6px/10px "Open Sans", sans-serif; }
    .page { display: flex; align-items: center; gap: 4px; width: 128px; height: 18px; background: #fff; border-radius: 5px 5px 0 0; padding: 0 5px 0 6px; }
    .caption { flex: 1; overflow: hidden; white-space: nowrap; mask-image: linear-gradient(90deg, #000 85%, #0004); }
    .new { margin-left: 8px; }
    .window { display: flex; align-items: center; gap: 18px; }
    .bar { display: flex; align-items: center; gap: 8px; height: 19px; background: #fff; color: #505357; padding: 0 8px 0 7px; }
    .address { flex: 1; display: flex; align-items: center; gap: 5px; height: 16px; border-radius: 8px; background: #f1f3f4; padding: 0 5px; }
    .url { flex: 1; min-width: 0; border: 0; outline: 0; background: none; padding: 0; font: 7px/12px "Open Sans", sans-serif; color: #5a5e62; }
    .faint { color: #b8babd; }
    .avatar { width: 12px; height: 12px; }
    .marks { display: flex; align-items: center; gap: 8px; height: 18px; background: #fff; border-bottom: 1px solid #c4c6c9; color: #3c4043; padding: 0 7px; font: 6px/10px "Open Sans", sans-serif; white-space: nowrap; }
    .mark { display: flex; align-items: center; gap: 4px; }
    .split { width: 1px; height: 9px; background: #c9cbce; }

    .dash { flex: 1; min-height: 0; display: grid; grid-template: 24px minmax(0, 1fr) / 165px minmax(0, 1fr) 281px; gap: 6px 5px; padding: 5px 5px 4px; }
    .head { grid-column: 1 / -1; display: flex; align-items: center; background: #1e376d; border: 1px solid #2c3a5c; color: #b4bccb; padding: 0 9px 0 7px; }
    .crest { width: 18px; height: 18px; margin-right: 7px; }
    .name { font-size: 13px; line-height: 20px; font-weight: 400; margin: 0; }
    .by { font-family: Roboto, sans-serif; font-size: 9px; margin-left: 4px; }
    .column { display: flex; flex-direction: column; min-width: 0; min-height: 0; }
    .card { background: #222; border: 1px solid #2b2b2b; }
    .updated { height: 51px; margin-bottom: 5px; flex: none; text-align: center; display: flex; flex-direction: column; justify-content: center; gap: 2px; padding-bottom: 5px; font-size: 11px; line-height: 15px; }
    .when { font-size: 15px; line-height: 18px; font-weight: 700; }
    .regions { flex: 1; min-height: 0; display: flex; flex-direction: column; }
    .intro { flex: none; text-align: center; font-size: 8px; line-height: 11px; padding: 3px 0; }
    .body { flex: 1; min-height: 0; display: flex; overflow: hidden; border-right: 0; }
    .list { flex: 1; list-style: none; margin: 0; padding: 0; }
    .item { height: 35px; padding: 3px 0 0 5px; border-bottom: 1px solid #4a4a4a; font-size: 9px; line-height: 10px; }
    .country { color: #fff; font-weight: 700; }
    .totals { font-size: 8px; }
    .sep { padding: 0 2px; }
    .rail { width: 4px; background: #3a3a3a; }
    .thumb { height: 16px; background: #6a6a6a; }
    .red { color: #e60000; }
    .white { color: #fff; }
    .green { color: #4ce600; }
    .bold { font-weight: 700; }
    .dim { color: #cc0004; }

    .kpis { display: grid; grid-template-columns: 178fr 165fr 205fr; gap: 5px; flex: none; margin-bottom: 5px; text-align: center; white-space: nowrap; }
    .kpi { height: 51px; padding-top: 1px; font-size: 8px; line-height: 10px; color: #e4e4e4; font-weight: 700; }
    .value { font-size: 27px; line-height: 36px; }
    .wide { font-size: 28px; }
    .tall { font-size: 31px; }
    .brief { height: 32px; padding-top: 0; font-size: 9px; line-height: 10px; }
    .brief .value { font-size: 18px; line-height: 22px; }
    .mapcard { position: relative; flex: 1; min-height: 0; display: grid; padding: 0 5px; }
    .credit { position: absolute; left: 0; right: 0; bottom: 0; height: 9px; display: flex; justify-content: space-between; padding: 0 3px; background: rgba(34, 34, 34, 0.8); font-size: 7px; line-height: 9px; color: #d2d2d2; }
    .legend { position: absolute; top: 8px; right: 7px; width: 18px; height: 17px; justify-content: center; background: #222; border: 1px solid #2870b8; color: #2870b8; }
    .zoom { position: absolute; right: 7px; bottom: 16px; display: grid; gap: 1px; }
    .step { width: 17px; height: 17px; justify-content: center; background: #222; color: #a8a8a8; }

    .tabs { display: flex; gap: 2px; flex: none; height: 16px; padding: 0 6px; white-space: nowrap; font-size: 7px; line-height: 10px; }
    .tab { padding: 0 7px; border: 1px solid #2b2b2b; border-top: 0; }
    .tab.on { background: #222; border-bottom: 1px solid #1f7fd0; }
    .charts { flex: 1; min-height: 0; display: grid; grid-template-rows: 126fr 136fr 126fr; gap: 10px; padding: 11px 16px 0 13px; }

    .downloads { display: flex; align-items: center; height: 31px; flex: none; background: #fff; color: #55585c; border-top: 1px solid #a5a7a9; padding: 0 6px 0 10px; font: 7px/10px Roboto, sans-serif; }
    .file { display: flex; align-items: center; justify-content: space-between; width: 117px; height: 24px; border-right: 1px solid #d6d8da; padding-right: 9px; }
    .all { height: 17px; padding: 0 7px; margin-right: 7px; border: 1px solid #d9dbde; border-radius: 2px; color: #2f8be0; }

    .task { display: flex; align-items: stretch; height: 16px; flex: none; background: linear-gradient(90deg, #121d30, #1c283a 22%, #14243c 45%, #1f2f35 75%, #23312d 88%, #172733); color: #fff; font: 6px/10px "Open Sans", sans-serif; white-space: nowrap; }
    .pins { display: flex; align-items: center; justify-content: space-between; width: 192px; padding: 0 0 0 5px; margin-right: 6px; }
    .slot { align-items: center; gap: 3px; padding: 0 3px; border-bottom: 1px solid #8cc6ec; width: 81px; margin-right: 5px; }
    .slot.on { background: #505860; width: 85px; padding: 0 4px; margin-right: 6px; }
    .pair { display: flex; align-items: center; gap: 11px; margin-right: 7px; }
    .tray { display: flex; align-items: center; gap: 5px; padding-right: 13px; font: 7px/10px Lato, sans-serif; }
    .clock { margin: 0 6px 0 2px; }
  `;

  private tabs(names: string[], current: string, pick: (n: string) => void) {
    return html`<div class="tabs" role="tablist">
      ${names.map(
        (n) => html`<button role="tab" aria-selected=${n === current} class=${classMap({ tab: true, on: n === current })} @click=${() => pick(n)}>${n}</button>`
      )}
    </div>`;
  }

  private kpis(rows: string[][], brief: boolean) {
    return html`<div class="kpis">
      ${rows.map(
        ([t, v, c]) => html`<div class=${classMap({ card: true, kpi: true, brief })}><div>${t}</div><div class="value ${c}">${v}</div></div>`
      )}
    </div>`;
  }

  private task(name: string, text: string, on = false) {
    return html`<button class=${classMap({ slot: true, on })}>${icon(name)}${text}</button>`;
  }

  render() {
    const sep = html`<span class="sep">|</span>`;
    return html`
      <div class="strip">
        <div class="page">${icon("site")}<span class="caption">Coronavirus COVID-19 (2019-nC</span><button aria-label="Close tab">${icon("close", "small")}</button></div>
        <button class="new" aria-label="New tab">${icon("plus", "small")}</button>
        <span class="grow"></span>
        <div class="window">
          ${icon("down")}
          <button aria-label="Minimize">${icon("minus", "small")}</button>
          <button aria-label="Restore">${icon("restore", "small")}</button>
          <button aria-label="Close">${icon("thinClose", "small")}</button>
        </div>
      </div>
      <div class="bar">
        <button aria-label="Back">${icon("back")}</button>
        <button class="faint" aria-label="Forward">${icon("forward")}</button>
        <button aria-label="Reload">${icon("reload")}</button>
        <button aria-label="Home">${icon("home")}</button>
        <div class="address">
          ${icon("lock", "small")}
          <input class="url" aria-label="Address" .value=${"arcgis.com/apps/dashboards/bda7594740fd40299423467b48e9ecf6"} />
          ${icon("star")}
        </div>
        ${icon("check")}${icon("gram")}${icon("puzzle")}${icon("face", "avatar")}
        <button aria-label="Menu">${icon("dots")}</button>
      </div>
      <nav class="marks">
        ${BOOKMARKS.map(([i, t]) => html`<a class="mark" href="#">${icon(i)}${t ? html`<span>${t}</span>` : nothing}</a>`)}
        <span class="grow"></span>
        ${icon("more", "small")}<span class="split"></span>
        <a class="mark" href="#">${icon("folder")}<span>Other bookmarks</span></a>
        <span class="split"></span>
        <a class="mark" href="#">${icon("list")}<span>Reading list</span></a>
      </nav>

      <main class="dash">
        <header class="head">
          ${icon("shield", "crest")}
          <h1 class="name">COVID-19 Dashboard</h1>
          <span class="by">by the Center for Systems Science and Engineering (CSSE) at Johns Hopkins University (JHU)</span>
          <span class="grow"></span>
          <button aria-label="Open menu">${icon("menu", "large")}</button>
        </header>

        <section class="column">
          <div class="card updated"><div>Last Updated at (M/D/YYYY)</div><div class="when">9/10/2021, 3:21 PM</div></div>
          <div class="card regions">
            <div class="intro">
              <div><span class="dim bold">Cases</span>${sep}<span class="white bold">Deaths</span><span> by</span></div>
              <div>Country/Region/Sovereignty</div>
            </div>
            <div class="body">
              <ul class="list">
                ${COUNTRIES.map(
                  ([n, c, d, tc, td]) => html`<li class="item">
                    <div class="country">${n}</div>
                    <div>28-Day: <span class="red bold">${c}</span>${sep}<span class="white bold">${d}</span></div>
                    <div class="totals">Totals: <span class="dim bold">${tc}</span>${sep}<span class="white bold">${td}</span></div>
                  </li>`
                )}
              </ul>
              <div class="rail"><div class="thumb"></div></div>
            </div>
          </div>
          ${this.tabs(["Admin0", "Admin1", "Admin2"], this.admin, (n) => (this.admin = n))}
        </section>

        <section class="column">
          ${this.kpis(TOTALS, false)} ${this.kpis(RECENT, true)}
          <div class="card mapcard">
            <world-map></world-map>
            <button class="legend" aria-label="Legend">${icon("legend")}</button>
            <div class="zoom">
              <button class="step" aria-label="Zoom in">${icon("thinPlus")}</button>
              <button class="step" aria-label="Zoom out">${icon("minus")}</button>
            </div>
            <div class="credit"><span>Esri, FAO, NOAA</span><span>Powered by Esri</span></div>
          </div>
          ${this.tabs(
            ["28-Day", "Totals", "Incidence", "Case-Fatality Ratio", "Global Vaccinations", "US Vaccinations", "Terms of Use"],
            this.view,
            (n) => (this.view = n)
          )}
        </section>

        <section class="column">
          <div class="card charts">
            <weekly-chart .label=${"Weekly Cases"} .tone=${"red"} .max=${6} .ticks=${["6M", "4M", "2M", "0"]} .values=${CASES}></weekly-chart>
            <weekly-chart .label=${"Weekly Deaths"} .tone=${"white"} .max=${120} .ticks=${["120k", "100k", "80k", "60k", "40k", "20k", "0"]} .values=${DEATHS}></weekly-chart>
            <weekly-chart .label=${"Weekly Doses Administered"} .tone=${"green"} .max=${400} .ticks=${["400M", "300M", "200M", "100M", "0"]} .values=${DOSES}></weekly-chart>
          </div>
          ${this.tabs(["Weekly", "Daily"], this.period, (n) => (this.period = n))}
        </section>
      </main>

      <div class="downloads">
        <button class="file">${icon("file")}<span>613a91f3a850b.im....jpg</span>${icon("up", "small")}</button>
        <span class="grow"></span>
        <button class="all">Show all</button>
        <button aria-label="Close downloads">${icon("thinClose", "small")}</button>
      </div>
      <footer class="task">
        <div class="pins">${["win", "search", "house", "camera", "cloud", "binoc", "fox", "mail", "explorer", "edge"].map((n) => icon(n))}</div>
        ${this.task("chrome", "Coronavirus COVID-1...", true)}
        <div class="pair">${icon("record")}${icon("notes")}</div>
        ${this.task("word", "Blog Post for Friday S...")} ${this.task("discord", "Discord")} ${this.task("steam", "Steam")}
        ${this.task("steam", "Friends List")}
        <span class="grow"></span>
        <div class="tray">
          ${icon("ell")}${icon("weather", "large")}<span>31°C</span><span>Partly su...</span>${icon("up", "small")}${icon("device")}${icon("wifi", "small")}${icon("sound")}
          <span class="clock">4:24 PM</span>${icon("note")}
        </div>
      </footer>
    `;
  }
}
